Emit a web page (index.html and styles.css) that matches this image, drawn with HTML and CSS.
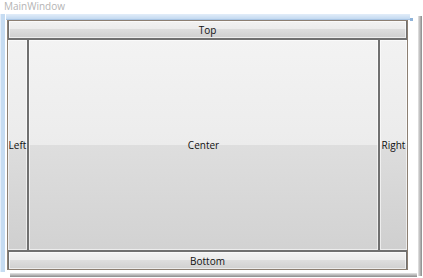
FILE: index.html
```html
<!DOCTYPE html>
<html>
<head>
<meta charset="utf-8">
<link rel="stylesheet" href="styles.css">
</head>
<body>
<div class="stage">
  <div class="title">MainWindow</div>
  <div class="frame">
    <div class="vbar"></div>
    <div class="main">
      <div class="hbar"><span class="grip"></span></div>
      <div class="window">
        <div class="btn top">Top</div>
        <div class="middle">
          <div class="btn left">Left</div>
          <div class="btn center">Center</div>
          <div class="btn right">Right</div>
        </div>
        <div class="btn bottom">Bottom</div>
      </div>
    </div>
    <div class="shadow-r"></div>
  </div>
  <div class="shadow-b"></div>
</div>
</body>
</html>
```
FILE: styles.css
```css
html, body { margin: 0; padding: 0; background: #fff; }
body { width: 423px; height: 278px; overflow: hidden; font-family: "Open Sans", "Noto Sans", sans-serif; }
.stage { position: relative; width: 423px; height: 278px; }
.title { height: 14px; padding-left: 4px; font-size: 10px; line-height: 13px; color: #b4b4b4; }
.frame { display: flex; height: 262px; }
.vbar { box-sizing: border-box; width: 5px; margin-right: 1px; background: #c6dcf2; border-left: 1px solid #e4eefa; height: 258px; }
.main { display: flex; flex-direction: column; width: 405px; }
.hbar { position: relative; height: 5px; background: linear-gradient(#e2edf9, #c3d9f0); border-bottom: 1px solid #a9c5e4; margin-right: 1px; }
.grip { position: absolute; right: -3px; top: 4px; width: 3px; height: 3px; background: #8fb3d9; }
.window { display: flex; flex-direction: column; box-sizing: border-box; width: 401px; height: 250px; margin-left: 1px; border: 1px solid #8c7f72; background: #fff; }
.btn { box-sizing: border-box; display: flex; align-items: center; justify-content: center; font-size: 10px; color: #111; border: 1px solid #707070; box-shadow: inset 0 0 0 1px rgba(255,255,255,0.6); background: linear-gradient(#f2f2f2 0%, #ebebeb 50%, #dddddd 50%, #cfcfcf 100%); }
.top, .bottom { height: 18px; }
.bottom { border-bottom: none; }
.top { border-top: none; }
.middle { display: flex; flex: 1; }
.left { width: 20px; border-left: none; }
.right { width: 28px; border-right: none; }
.center { flex: 1; background: linear-gradient(#f3f3f3 0%, #ececec 50%, #dedede 50%, #d2d2d2 100%); }
.shadow-r { width: 4px; margin-left: 7px; margin-top: 2px; height: 260px; background: linear-gradient(90deg, #e6e6e6, #8a8a8a); }
.shadow-b { position: absolute; left: 10px; top: 273px; width: 407px; height: 4px; background: linear-gradient(#e6e6e6, #8a8a8a); }
```
